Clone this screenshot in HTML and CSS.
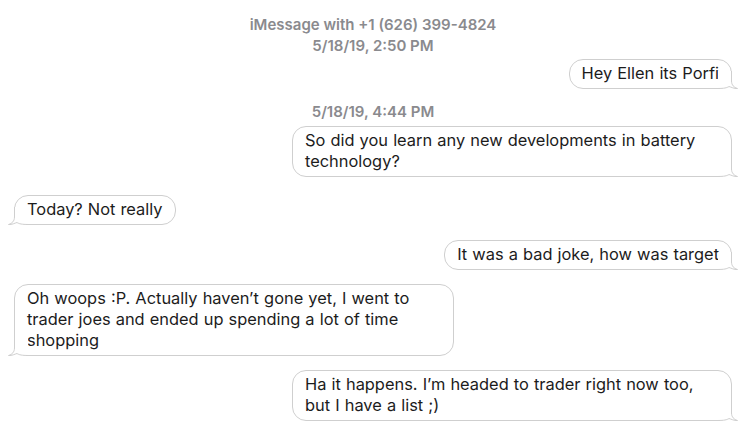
FILE: index.html
```html
<!DOCTYPE html>
<html lang="en">
<head>
<meta charset="utf-8">
<title>iMessage</title>
<link rel="stylesheet" href="styles.css">
</head>
<body>
<div class="thread">
  <div class="header">
    <div>iMessage with +1 (626) 399-4824</div>
    <div>5/18/19, 2:50 PM</div>
  </div>

  <div class="bubble out first">Hey Ellen its Porfi<svg class="tail" viewBox="0 0 20 18" width="20" height="18"><path class="tail-fill" d="M0 0H13.5V10C13.5 14 16 16.5 19.5 17.5C16 17.8 13 16 11 15.5C9 16.8 6 17.5 0 17.5Z"/><path class="tail-line" d="M13.5 0V10C13.5 14 16 16.5 19.5 17.5C16 17.8 13 16 11 15.5C9 16.8 6 17.5 0 17.5"/></svg></div>

  <div class="stamp">5/18/19, 4:44 PM</div>

  <div class="bubble out after-stamp">So did you learn any new developments in battery technology?<svg class="tail" viewBox="0 0 20 18" width="20" height="18"><path class="tail-fill" d="M0 0H13.5V10C13.5 14 16 16.5 19.5 17.5C16 17.8 13 16 11 15.5C9 16.8 6 17.5 0 17.5Z"/><path class="tail-line" d="M13.5 0V10C13.5 14 16 16.5 19.5 17.5C16 17.8 13 16 11 15.5C9 16.8 6 17.5 0 17.5"/></svg></div>

  <div class="bubble in gap-lg">Today? Not really<svg class="tail" viewBox="0 0 20 18" width="20" height="18"><path class="tail-fill" d="M0 0H13.5V10C13.5 14 16 16.5 19.5 17.5C16 17.8 13 16 11 15.5C9 16.8 6 17.5 0 17.5Z"/><path class="tail-line" d="M13.5 0V10C13.5 14 16 16.5 19.5 17.5C16 17.8 13 16 11 15.5C9 16.8 6 17.5 0 17.5"/></svg></div>

  <div class="bubble out gap">It was a bad joke, how was target<svg class="tail" viewBox="0 0 20 18" width="20" height="18"><path class="tail-fill" d="M0 0H13.5V10C13.5 14 16 16.5 19.5 17.5C16 17.8 13 16 11 15.5C9 16.8 6 17.5 0 17.5Z"/><path class="tail-line" d="M13.5 0V10C13.5 14 16 16.5 19.5 17.5C16 17.8 13 16 11 15.5C9 16.8 6 17.5 0 17.5"/></svg></div>

  <div class="bubble in gap-sm">Oh woops :P. Actually haven’t gone yet, I went to trader joes and ended up spending a lot of time shopping<svg class="tail" viewBox="0 0 20 18" width="20" height="18"><path class="tail-fill" d="M0 0H13.5V10C13.5 14 16 16.5 19.5 17.5C16 17.8 13 16 11 15.5C9 16.8 6 17.5 0 17.5Z"/><path class="tail-line" d="M13.5 0V10C13.5 14 16 16.5 19.5 17.5C16 17.8 13 16 11 15.5C9 16.8 6 17.5 0 17.5"/></svg></div>

  <div class="bubble out gap-sm">Ha it happens. I’m headed to trader right now too, but I have a list ;)<svg class="tail" viewBox="0 0 20 18" width="20" height="18"><path class="tail-fill" d="M0 0H13.5V10C13.5 14 16 16.5 19.5 17.5C16 17.8 13 16 11 15.5C9 16.8 6 17.5 0 17.5Z"/><path class="tail-line" d="M13.5 0V10C13.5 14 16 16.5 19.5 17.5C16 17.8 13 16 11 15.5C9 16.8 6 17.5 0 17.5"/></svg></div>
</div>
</body>
</html>
```

FILE: styles.css
```css
* { box-sizing: border-box; }

html, body {
  margin: 0;
  background: #ffffff;
}

body {
  width: 740px;
  height: 428px;
  overflow: hidden;
  font-family: "Inter", "Liberation Sans", sans-serif;
  color: #1c1c1c;
}

.thread {
  display: flex;
  flex-direction: column;
  padding: 14px 8px 0 14px;
}

.header,
.stamp {
  text-align: center;
  font-size: 15px;
  font-weight: 600;
  line-height: 21px;
  color: #8a8a8e;
}

.stamp {
  margin-top: 12px;
}

.bubble {
  position: relative;
  max-width: 440px;
  padding: 3px 12px 4px;
  border: 1px solid #cfcfcf;
  border-radius: 14px;
  background: #ffffff;
  font-size: 16.4px;
  word-spacing: 0.5px;
  line-height: 21px;
}

.bubble.out {
  align-self: flex-end;
}

.bubble.in {
  align-self: flex-start;
}

.first { margin-top: 3px; }
.after-stamp { margin-top: 4px; }
.gap-lg { margin-top: 18px; }
.gap { margin-top: 15px; }
.gap-sm { margin-top: 14px; }

.tail {
  position: absolute;
  bottom: -1px;
  right: -7px;
  overflow: visible;
}

.bubble.in .tail {
  right: auto;
  left: -7px;
  transform: scaleX(-1);
}

.tail-fill {
  fill: #ffffff;
  stroke: none;
}

.tail-line {
  fill: none;
  stroke: #cfcfcf;
  stroke-width: 1;
}
```
